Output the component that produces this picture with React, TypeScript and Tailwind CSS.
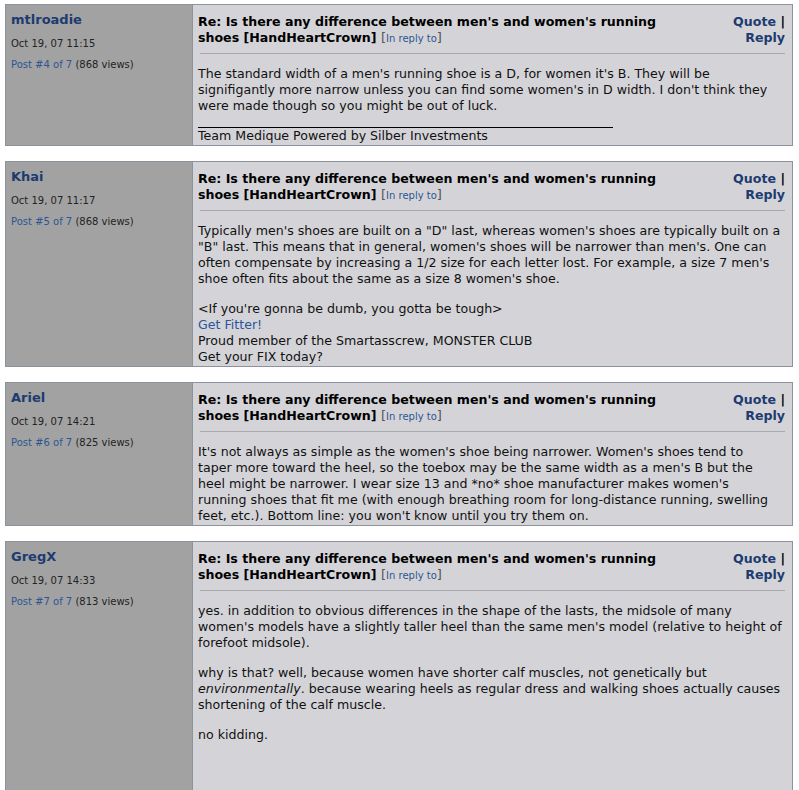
import React from "react";

type Post = {
  user: string;
  date: string;
  num: number;
  views: number;
  body: React.ReactNode;
  last?: boolean;
};

// lines are broken where the original page broke them
function Lines({ lines, className = "" }: { lines: React.ReactNode[]; className?: string }) {
  return (
    <p className={`whitespace-nowrap ${className}`}>
      {lines.map((l, i) => (
        <span key={i} className="block">
          {l}
        </span>
      ))}
    </p>
  );
}

const posts: Post[] = [
  {
    user: "mtlroadie",
    date: "Oct 19, 07 11:15",
    num: 4,
    views: 868,
    body: (
      <>
        <Lines
          lines={[
            "The standard width of a men's running shoe is a D, for women it's B. They will be",
            "signifigantly more narrow unless you can find some women's in D width. I don't think they",
            "were made though so you might be out of luck.",
          ]}
        />
        <div className="h-[14px] w-[415px] border-b border-black" />
        <p>Team Medique Powered by Silber Investments</p>
      </>
    ),
  },
  {
    user: "Khai",
    date: "Oct 19, 07 11:17",
    num: 5,
    views: 868,
    body: (
      <>
        <Lines
          lines={[
            `Typically men's shoes are built on a "D" last, whereas women's shoes are typically built on a`,
            `"B" last. This means that in general, women's shoes will be narrower than men's. One can`,
            "often compensate by increasing a 1/2 size for each letter lost. For example, a size 7 men's",
            "shoe often fits about the same as a size 8 women's shoe.",
          ]}
        />
        <p className="mt-[14px]">&lt;If you're gonna be dumb, you gotta be tough&gt;</p>
        <p className="text-[#2a5698]">Get Fitter!</p>
        <p>Proud member of the Smartasscrew, MONSTER CLUB</p>
        <p>Get your FIX today?</p>
      </>
    ),
  },
  {
    user: "Ariel",
    date: "Oct 19, 07 14:21",
    num: 6,
    views: 825,
    body: (
      <Lines
        lines={[
          "It's not always as simple as the women's shoe being narrower. Women's shoes tend to",
          "taper more toward the heel, so the toebox may be the same width as a men's B but the",
          "heel might be narrower. I wear size 13 and *no* shoe manufacturer makes women's",
          "running shoes that fit me (with enough breathing room for long-distance running, swelling",
          "feet, etc.). Bottom line: you won't know until you try them on.",
        ]}
      />
    ),
  },
  {
    user: "GregX",
    date: "Oct 19, 07 14:33",
    num: 7,
    views: 813,
    last: true,
    body: (
      <>
        <Lines
          lines={[
            "yes. in addition to obvious differences in the shape of the lasts, the midsole of many",
            "women's models have a slightly taller heel than the same men's model (relative to height of",
            "forefoot midsole).",
          ]}
        />
        <Lines
          className="mt-[14px]"
          lines={[
            "why is that? well, because women have shorter calf muscles, not genetically but",
            <>
              <i>environmentally</i>. because wearing heels as regular dress and walking shoes actually causes
            </>,
            "shortening of the calf muscle.",
          ]}
        />
        <p className="mt-[14px]">no kidding.</p>
      </>
    ),
  },
];

function PostCard({ post }: { post: Post }) {
  return (
    <div className={`flex border border-[#8b939d] ${post.last ? "min-h-[260px]" : ""}`}>
      <div className="w-[187px] shrink-0 bg-[#a2a2a2] border-r border-[#8b939d] pl-[5px] pt-[7px]">
        <div className="text-[13px] font-bold leading-[16px] text-[#1d3b70]">{post.user}</div>
        <div className="mt-[10px] text-[10px] leading-[12px] text-[#222]">{post.date}</div>
        <div className="mt-[9px] text-[10px] leading-[12px] text-[#222]">
          <span className="text-[#2c5693]">Post #{post.num} of 7</span> ({post.views} views)
        </div>
      </div>
      <div className="flex-1 min-w-0 overflow-hidden bg-[#d4d4d8] pl-[5px] pr-[7px] pt-[9px] pb-[1px] text-[12.6px] leading-[16px] text-[#111]">
        <div className="flex justify-between">
          <div className="w-[500px] font-bold text-[12.6px] text-black">
            Re: Is there any difference between men's and women's running shoes [HandHeartCrown]{" "}
            <span className="font-normal text-[10px] text-[#2c5693]">
              <span className="text-[13px] text-[#555]">[</span>In reply to
              <span className="text-[13px] text-[#555]">]</span>
            </span>
          </div>
          <div className="w-[60px] text-right font-bold text-[12.6px] text-[#1d3b70]">
            Quote <span className="text-black">|</span>
            <br />
            Reply
          </div>
        </div>
        <div className="mt-[6px] mb-[12px] ml-[2px] border-t border-[#a9a9ad]" />
        {post.body}
      </div>
    </div>
  );
}

export default function App() {
  return (
    <div
      className="min-h-screen bg-white pt-[4px] pl-[5px] pr-[6px] flex flex-col gap-[15px]"
      style={{ fontFamily: '"DejaVu Sans", Verdana, sans-serif' }}
    >
      {posts.map((p) => (
        <PostCard key={p.num} post={p} />
      ))}
    </div>
  );
}
